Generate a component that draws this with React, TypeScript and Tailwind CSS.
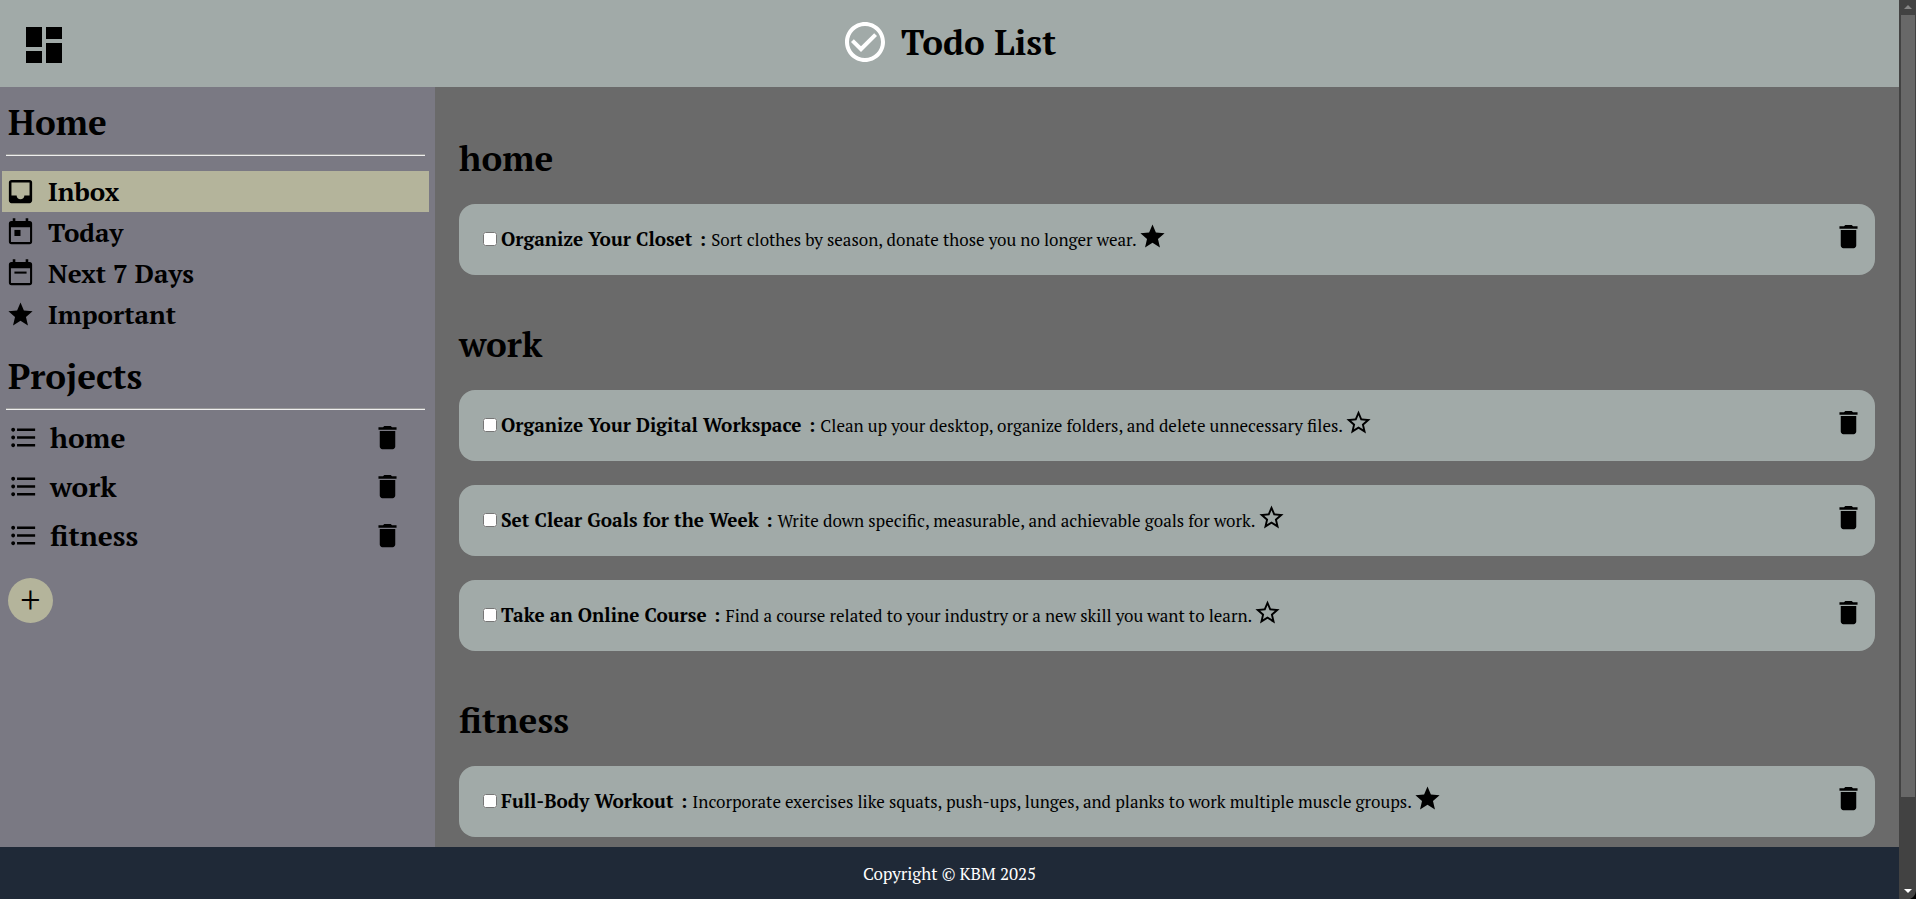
import { useState } from "react";
import type { ReactNode } from "react";
import {
  MdCheckCircleOutline,
  MdDashboard,
  MdDelete,
  MdFormatListBulleted,
  MdInbox,
  MdStar,
  MdStarBorder,
} from "react-icons/md";

type Task = { title: string; details: string; important: boolean };
type Project = { name: string; tasks: Task[] };

const projects: Project[] = [
  {
    name: "home",
    tasks: [
      {
        title: "Organize Your Closet",
        details: "Sort clothes by season, donate those you no longer wear.",
        important: true,
      },
    ],
  },
  {
    name: "work",
    tasks: [
      {
        title: "Organize Your Digital Workspace",
        details: "Clean up your desktop, organize folders, and delete unnecessary files.",
        important: false,
      },
      {
        title: "Set Clear Goals for the Week",
        details: "Write down specific, measurable, and achievable goals for work.",
        important: false,
      },
      {
        title: "Take an Online Course",
        details: "Find a course related to your industry or a new skill you want to learn.",
        important: false,
      },
    ],
  },
  {
    name: "fitness",
    tasks: [
      {
        title: "Full-Body Workout",
        details:
          "Incorporate exercises like squats, push-ups, lunges, and planks to work multiple muscle groups.",
        important: true,
      },
    ],
  },
];

function CalendarIcon({ children }: { children: ReactNode }) {
  return (
    <svg viewBox="0 0 24 24" className="size-[31px]" fill="currentColor" aria-hidden="true">
      <path d="M19 3h-1V1h-2v2H8V1H6v2H5a2 2 0 0 0-2 2v14a2 2 0 0 0 2 2h14a2 2 0 0 0 2-2V5a2 2 0 0 0-2-2zm.4 16a.4.4 0 0 1-.4.4H5a.4.4 0 0 1-.4-.4V8h14.8z" />
      {children}
    </svg>
  );
}

const filters = [
  { label: "Inbox", icon: <MdInbox className="size-[31px]" /> },
  { label: "Today", icon: <CalendarIcon><path d="M7.3 10H12v4.7H7.3z" /></CalendarIcon> },
  { label: "Next 7 Days", icon: <CalendarIcon><path d="M7.3 10.5h9.4v1.6H7.3z" /></CalendarIcon> },
  { label: "Important", icon: <MdStar className="size-[31px] p-px" /> },
];

function TaskCard({ task, id }: { task: Task; id: string }) {
  const [done, setDone] = useState(false);
  const [important, setImportant] = useState(task.important);
  return (
    <li className="flex h-[71px] items-center justify-between rounded-2xl bg-[#a1aaa8] pr-[11px] pl-6">
      <div className="flex items-center">
        <input
          id={id}
          type="checkbox"
          checked={done}
          onChange={() => setDone(!done)}
          className="mr-1 mb-px size-[14px]"
        />
        <label htmlFor={id} className="text-[17px]">
          <strong className="text-[19px]">
            {task.title} <span className="ml-[2px]">: </span>
          </strong>
          {task.details}
        </label>
        <button
          type="button"
          aria-label="Toggle important"
          className="ml-px pb-1.5"
          onClick={() => setImportant(!important)}
        >
          {important ? <MdStar className="size-[29px]" /> : <MdStarBorder className="size-[29px]" />}
        </button>
      </div>
      <button type="button" aria-label="Delete task" className="pb-1.5">
        <MdDelete className="size-[31px]" />
      </button>
    </li>
  );
}

function ScrollRail() {
  return (
    <div className="flex w-[17px] shrink-0 flex-col items-center bg-[#424242]" aria-hidden="true">
      <svg viewBox="0 0 17 15" className="h-[15px] w-[17px] shrink-0">
        <path d="M5 9h8L9 5z" fill="#868686" />
      </svg>
      <div className="h-[87%] w-[14px] bg-[#686868]" />
      <div className="flex-1" />
      <svg viewBox="0 0 17 15" className="h-[15px] w-[17px] shrink-0">
        <path d="M17 7q-1 6-6 8h6z" fill="#000" />
        <path d="M5 5h8l-4 4z" fill="#fff" />
      </svg>
    </div>
  );
}

function Rule() {
  return <hr className="mt-2 mr-[10px] ml-[6px] border-t border-b border-t-[#9a9a9a] border-b-[#eeeeee]" />;
}

export default function App() {
  const [active, setActive] = useState("Inbox");
  return (
    <div className="flex h-screen overflow-hidden font-['PT_Serif','Liberation_Serif',serif] text-black">
      <div className="flex min-w-0 flex-1 flex-col">
        <header className="relative flex h-[87px] shrink-0 items-center justify-center bg-[#a1aaa8] pr-[2px] pb-[3px]">
          <button type="button" aria-label="Toggle sidebar" className="absolute top-[21px] left-5">
            <MdDashboard className="size-12" />
          </button>
          <MdCheckCircleOutline className="mr-3 size-12 text-white" />
          <h1 className="text-[35px] font-bold">Todo List</h1>
        </header>

        <div className="flex min-h-0 flex-1">
          <aside className="w-[435px] shrink-0 bg-[#7a7983] pt-[11px]">
            <h2 className="ml-2 text-[35px] leading-12 font-bold">Home</h2>
            <Rule />
            <nav className="mt-[15px] mr-[6px] ml-[2px]">
              {filters.map(({ label, icon }) => (
                <button
                  key={label}
                  type="button"
                  onClick={() => setActive(label)}
                  className={`flex h-[41px] w-full items-center gap-3 pl-[3px] text-[26px] font-bold ${
                    active === label ? "bg-[#b4b49b]" : ""
                  }`}
                >
                  {icon}
                  {label}
                </button>
              ))}
            </nav>
            <h2 className="mt-[17px] ml-2 text-[35px] leading-12 font-bold">Projects</h2>
            <Rule />
            <ul className="mt-[3px]">
              {projects.map(({ name }) => (
                <li key={name} className="flex h-[49px] items-center justify-between pr-8 pl-2">
                  <a href={`#${name}`} className="flex items-center gap-[11px] text-[28px] font-bold">
                    <MdFormatListBulleted className="size-[31px]" />
                    {name}
                  </a>
                  <button type="button" aria-label={`Delete ${name}`}>
                    <MdDelete className="size-[31px]" />
                  </button>
                </li>
              ))}
            </ul>
            <button
              type="button"
              aria-label="Add project"
              className="mt-[18px] ml-2 flex size-[45px] items-center justify-center rounded-full bg-[#b4b49b] pb-[3px] text-[38px] leading-none"
            >
              +
            </button>
          </aside>

          <main className="flex min-w-0 flex-1 flex-col gap-[45px] overflow-hidden bg-[#6a6a6a] px-6 pt-[47px]">
            {projects.map(({ name, tasks }) => (
              <section key={name} id={name}>
                <h2 className="text-[35px] leading-12 font-bold">{name}</h2>
                <ul className="mt-[22px] flex flex-col gap-6">
                  {tasks.map((task, index) => (
                    <TaskCard key={task.title} task={task} id={`${name}-${index}`} />
                  ))}
                </ul>
              </section>
            ))}
          </main>
        </div>

        <footer className="flex h-[52px] shrink-0 items-center justify-center bg-[#1f2937] pt-[2px] text-[17px] text-white">
          Copyright © KBM 2025
        </footer>
      </div>
      <ScrollRail />
    </div>
  );
}
